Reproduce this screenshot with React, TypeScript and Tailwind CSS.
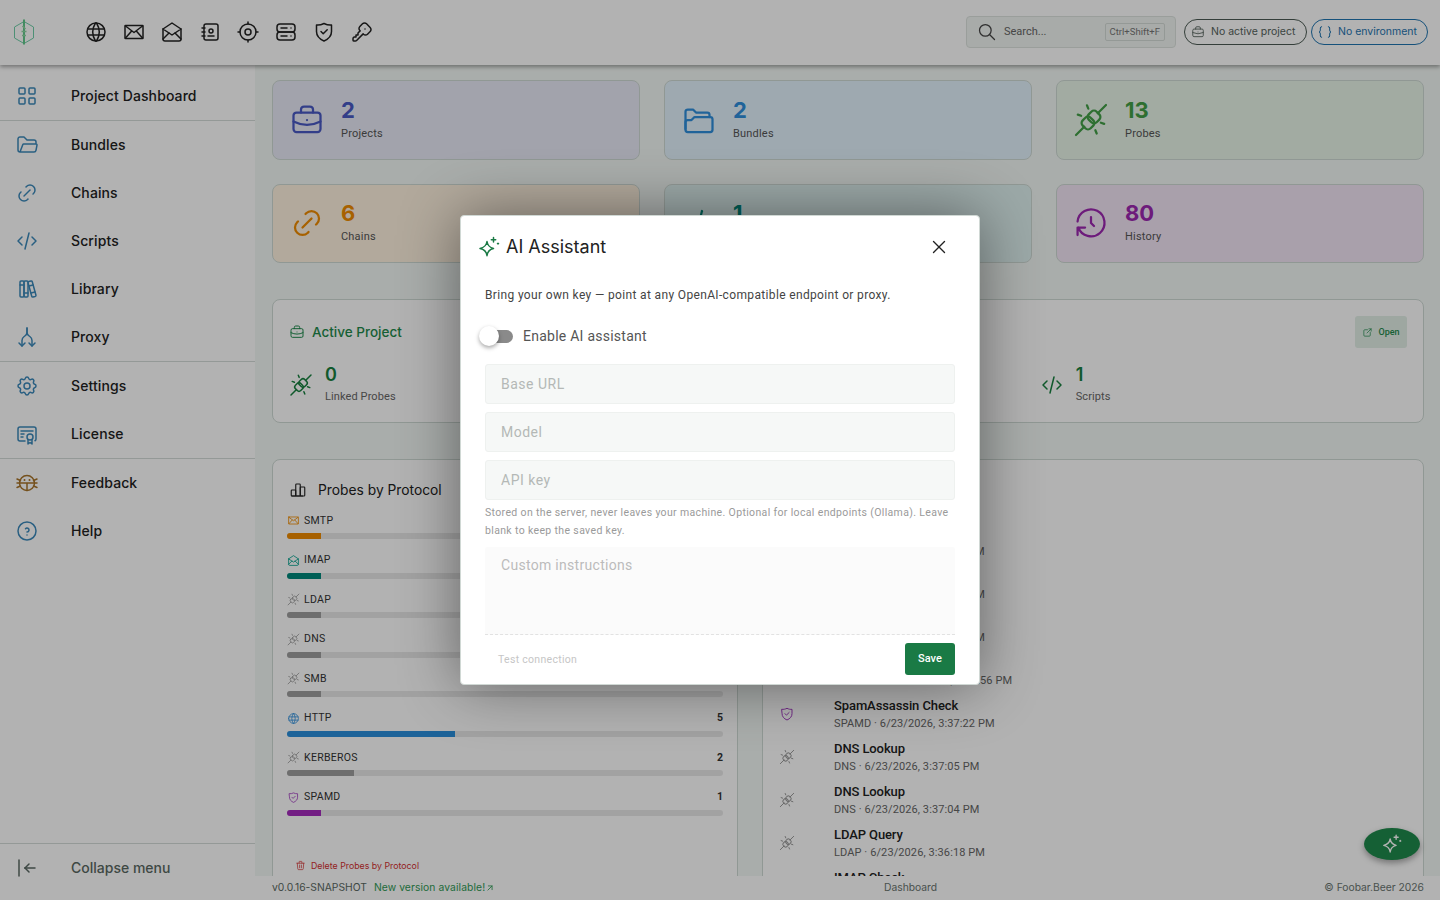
import React from 'react';
import {
  TbWorld, TbMailOpened, TbAddressBook, TbCurrentLocation, TbServer2, TbKey,
  TbLayoutGrid, TbFolderOpen, TbLink, TbCode, TbBooks, TbSettings, TbCertificate, TbHelpCircle,
  TbArrowBarToLeft, TbBriefcase, TbHistory, TbChartBar, TbTrash, TbExternalLink, TbSearch,
  TbBraces, TbX, TbArrowUpRight, TbArrowsSplit2,
} from 'react-icons/tb';

type IconProps = { className?: string; strokeWidth?: number };

const svgProps = {
  viewBox: '0 0 24 24',
  fill: 'none',
  stroke: 'currentColor',
  strokeLinecap: 'round' as const,
  strokeLinejoin: 'round' as const,
};

function ProbeIcon({ className }: IconProps) {
  return (
    <svg {...svgProps} strokeWidth="1.5" className={className}>
      <path d="M2 22l5.500-5.500M16.500 7.500L22 2" />
      <rect x="10.250" y="6.250" width="7.500" height="7.500" rx="2.500" transform="rotate(-45 14 10)" />
      <rect x="6.250" y="10.250" width="7.500" height="7.500" rx="2.500" transform="rotate(-45 10 14)" />
      <path d="M9.300 2.200l.9 2.200M3.200 8.400l2.200.8M20.800 14.600l-2.200-.8M15.800 21l-.9-2.200" />
    </svg>
  );
}

function SparkIcon({ className }: IconProps) {
  return (
    <svg {...svgProps} strokeWidth="1.5" className={className}>
      <path d="M10 6.500c.6 4.200 2.300 6 6.500 7-4.200.9-5.900 2.800-6.500 7.200-.6-4.400-2.400-6.300-7-7.200 4.600-1 6.400-2.800 7-7z" />
      <path d="M16.500 2.500v4.400M14.300 4.700h4.400M21 8.200v.9M20.500 8.600h1" />
    </svg>
  );
}

function MailXIcon({ className }: IconProps) {
  return (
    <svg {...svgProps} strokeWidth="1.5" className={className}>
      <rect x="3" y="5.500" width="18" height="13" rx="0.500" />
      <path d="M3.500 6l8.500 6.500L20.500 6M3.500 18l6.200-7M20.500 18l-6.200-7" />
    </svg>
  );
}

function ShieldIcon({ className }: IconProps) {
  return (
    <svg {...svgProps} strokeWidth="1.5" className={className}>
      <path d="M4.500 5c2.500.3 5-.3 7.500-1.500 2.500 1.200 5 1.800 7.500 1.500v6.500c0 4.500-3 7.500-7.500 9.500-4.500-2-7.500-5-7.500-9.500z" />
      <path d="M9 11.500l2.200 2.200 4-4" />
    </svg>
  );
}

function FoldersIcon({ className }: IconProps) {
  return (
    <svg {...svgProps} strokeWidth="1.5" className={className}>
      <path d="M3 18V6.500A1.500 1.500 0 0 1 4.500 5H8l2 2h7.500A1.500 1.500 0 0 1 19 8.500V10" />
      <path d="M3 18.500A1.500 1.500 0 0 0 4.500 20h15a1.500 1.500 0 0 0 1.500-1.500v-7a1.500 1.500 0 0 0-1.500-1.500H9l-2 2H4.500A1.500 1.500 0 0 0 3 13.500z" />
    </svg>
  );
}

function BugIcon({ className }: IconProps) {
  return (
    <svg {...svgProps} strokeWidth="1.5" className={className}>
      <circle cx="12" cy="12" r="7.500" />
      <path d="M4.500 12h15M12 12v7.500M2 8l3.500 1.500M2 12h2.500M2 16.500L5.500 15M22 8l-3.500 1.500M22 12h-2.500M22 16.500L18.500 15" />
      <path d="M9.500 9h.01M14.500 9h.01" strokeWidth="2" />
    </svg>
  );
}

function ProxyIcon({ className, strokeWidth }: IconProps) {
  return <TbArrowsSplit2 className={`rotate-90 ${className ?? ''}`} strokeWidth={strokeWidth} />;
}

function ServerIcon({ className, strokeWidth }: IconProps) {
  return <TbServer2 className={`-scale-x-100 ${className ?? ''}`} strokeWidth={strokeWidth} />;
}

const topIcons = [TbWorld, MailXIcon, TbMailOpened, TbAddressBook, TbCurrentLocation, ServerIcon, ShieldIcon, TbKey];

const navBlue = 'text-[#3c89ba]';
const navGroups = [
  [{ label: 'Project Dashboard', icon: TbLayoutGrid, color: navBlue }],
  [
    { label: 'Bundles', icon: TbFolderOpen, color: navBlue },
    { label: 'Chains', icon: TbLink, color: navBlue },
    { label: 'Scripts', icon: TbCode, color: navBlue },
    { label: 'Library', icon: TbBooks, color: navBlue },
    { label: 'Proxy', icon: ProxyIcon, color: navBlue },
  ],
  [
    { label: 'Settings', icon: TbSettings, color: navBlue },
    { label: 'License', icon: TbCertificate, color: navBlue },
  ],
  [
    { label: 'Feedback', icon: BugIcon, color: 'text-[#a8742a]' },
    { label: 'Help', icon: TbHelpCircle, color: navBlue },
  ],
];

const stats = [
  { value: '2', label: 'Projects', icon: TbBriefcase, bg: 'bg-[#e8eaf6]', color: 'text-[#4a5ac4]' },
  { value: '2', label: 'Bundles', icon: FoldersIcon, bg: 'bg-[#e3f2fd]', color: 'text-[#2f8fdc]' },
  { value: '13', label: 'Probes', icon: ProbeIcon, bg: 'bg-[#e8f5e9]', color: 'text-[#43a047]' },
  { value: '6', label: 'Chains', icon: TbLink, bg: 'bg-[#fff3e0]', color: 'text-[#f08c00]' },
  { value: '1', label: 'Scripts', icon: TbCode, bg: 'bg-[#e0f2f1]', color: 'text-[#00897b]' },
  { value: '80', label: 'History', icon: TbHistory, bg: 'bg-[#f3e5f5]', color: 'text-[#9c27b0]' },
];

const protocols = [
  { name: 'SMTP', count: 1, icon: MailXIcon, text: 'text-[#f08c00]', bar: 'bg-[#f08c00]' },
  { name: 'IMAP', count: 1, icon: TbMailOpened, text: 'text-[#00a08c]', bar: 'bg-[#00897b]' },
  { name: 'LDAP', count: 1, icon: ProbeIcon, text: 'text-[#9a9a9a]', bar: 'bg-[#9e9e9e]' },
  { name: 'DNS', count: 1, icon: ProbeIcon, text: 'text-[#9a9a9a]', bar: 'bg-[#9e9e9e]' },
  { name: 'SMB', count: 1, icon: ProbeIcon, text: 'text-[#9a9a9a]', bar: 'bg-[#9e9e9e]' },
  { name: 'HTTP', count: 5, icon: TbWorld, text: 'text-[#2d8fdc]', bar: 'bg-[#2a8fdc]' },
  { name: 'KERBEROS', count: 2, icon: ProbeIcon, text: 'text-[#9a9a9a]', bar: 'bg-[#9e9e9e]' },
  { name: 'SPAMD', count: 1, icon: ShieldIcon, text: 'text-[#a23cc0]', bar: 'bg-[#a52bbd]' },
];

const recent = [
  { title: 'IMAP Check', sub: 'IMAP · 6/23/2026, 3:38:41 PM', icon: TbMailOpened, color: 'text-[#00a08c]' },
  { title: 'LDAP Query', sub: 'LDAP · 6/23/2026, 3:38:30 PM', icon: ProbeIcon, color: 'text-[#9a9a9a]' },
  { title: 'DNS Lookup', sub: 'LDAP · 6/23/2026, 3:38:12 PM', icon: ProbeIcon, color: 'text-[#9a9a9a]' },
  { title: 'Kerberos Check', sub: 'KERBEROS · 6/23/2026, 3:37:56 PM', icon: ProbeIcon, color: 'text-[#9a9a9a]' },
  { title: 'SpamAssassin Check', sub: 'SPAMD · 6/23/2026, 3:37:22 PM', icon: ShieldIcon, color: 'text-[#a23cc0]' },
  { title: 'DNS Lookup', sub: 'DNS · 6/23/2026, 3:37:05 PM', icon: ProbeIcon, color: 'text-[#9a9a9a]' },
  { title: 'DNS Lookup', sub: 'DNS · 6/23/2026, 3:37:04 PM', icon: ProbeIcon, color: 'text-[#9a9a9a]' },
  { title: 'LDAP Query', sub: 'LDAP · 6/23/2026, 3:36:18 PM', icon: ProbeIcon, color: 'text-[#9a9a9a]' },
  { title: 'IMAP Check', sub: 'IMAP · 6/23/2026, 3:36:02 PM', icon: TbMailOpened, color: 'text-[#00a08c]' },
];

const inputCls =
  'h-10 w-full rounded-[3px] border border-[#eef1ef] bg-[#f6f8f7] px-[15px] text-sm tracking-[0.5px] text-[#222] outline-none placeholder:text-[#b4b8b6]';

function Logo() {
  return (
    <svg viewBox="0 0 24 28" className="h-7 w-6" fill="none">
      <path d="M12 3.500l9.500 5.500v11L12 25.500l-9.500-5.500V9z" stroke="#6fcfa8" strokeWidth="1" />
      <path d="M12 1.500v25" stroke="#62c98c" strokeWidth="2" />
      <path d="M9.500 13.500h5M10 17.500h4M10.500 8l3 3" stroke="#8fd6a2" strokeWidth="1.500" />
    </svg>
  );
}

export default function App() {
  return (
    <div className="relative flex h-[900px] w-[1440px] flex-col overflow-hidden bg-[#f3f8f5] [font-family:Roboto,sans-serif] text-[#222]">
      {/* Top bar */}
      <header className="relative z-20 flex h-[65px] shrink-0 items-center bg-white pb-px pl-3 pr-3 shadow-[0_2px_4px_rgba(0,0,0,0.35)]">
        <div className="flex w-6 items-center justify-center"><Logo /></div>
        <nav className="ml-[48px] flex items-center gap-[14px]">
          {topIcons.map((Icon, i) => (
            <Icon key={i} className="h-6 w-6 text-[#222]" strokeWidth={1.5} />
          ))}
        </nav>
        <div className="ml-auto flex items-center">
          <div className="flex h-8 w-[210px] items-center rounded-[4px] border border-[#dde3df] bg-[#f1f5f2] pl-[10px] pr-[10px]">
            <TbSearch className="h-5 w-5 text-[#444]" strokeWidth={1.5} />
            <span className="ml-[7px] text-[11px] text-[#666]">Search...</span>
            <span className="ml-auto rounded-[2px] border border-[#d5dbd7] px-1 py-px text-[9.500px] text-[#777]">Ctrl+Shift+F</span>
          </div>
          <div className="ml-2 flex h-[26px] w-[123px] items-center gap-[6px] rounded-full border border-[#4b5a53] pl-[6px] [font-family:Inter,sans-serif] text-[10.500px] text-[#55625c]">
            <TbBriefcase className="h-[14px] w-[14px]" strokeWidth={1.5} />
            No active project
          </div>
          <div className="ml-1 flex h-[26px] w-[117px] items-center gap-[5px] rounded-full border border-[#1f74b0] pl-[5px] [font-family:Inter,sans-serif] text-[10.500px] text-[#1f74b0]">
            <TbBraces className="h-4 w-4" strokeWidth={1.5} />
            No environment
          </div>
        </div>
      </header>

      <div className="flex min-h-0 flex-1">
        {/* Sidebar */}
        <aside className="flex w-[255px] shrink-0 flex-col bg-white pt-[7px] [font-family:Inter,sans-serif]">
          {navGroups.map((group, g) => (
            <div key={g} className={g < navGroups.length - 1 ? 'border-b border-[#d4dcd8]' : ''}>
              {group.map((item) => (
                <div key={item.label} className="flex h-12 items-center pl-[15px]">
                  <item.icon className={`h-6 w-6 ${item.color}`} strokeWidth={1.5} />
                  <span className="ml-8 text-sm font-medium tracking-[0.1px] text-[#222]">{item.label}</span>
                </div>
              ))}
            </div>
          ))}
          <div className="mt-auto flex h-[57px] items-start border-t border-[#d4dcd8] pl-[15px] pt-3">
            <TbArrowBarToLeft className="h-6 w-6 text-[#5a6862]" strokeWidth={1.5} />
            <span className="ml-8 mt-[2px] text-sm font-medium text-[#5a6862]">Collapse menu</span>
          </div>
        </aside>

        {/* Main */}
        <div className="flex min-w-0 flex-1 flex-col">
          <main className="min-h-0 flex-1 overflow-hidden pl-[17px] pr-4 pt-[15px]">
            <div className="grid grid-cols-3 gap-x-6 gap-y-6">
              {stats.map((s) => (
                <div key={s.label} className={`flex h-[79.500px] items-center rounded-lg border border-[#cfdad5] pl-4 ${s.bg}`}>
                  <s.icon className={`h-9 w-9 ${s.color}`} strokeWidth={1.5} />
                  <div className="ml-4">
                    <div className={`[font-family:Inter,sans-serif] text-[22px] leading-[26px] font-bold ${s.color}`}>{s.value}</div>
                    <div className="mt-[2px] text-[11px] leading-[18px] tracking-[0.2px] text-[#555]">{s.label}</div>
                  </div>
                </div>
              ))}
            </div>

            {/* Active project */}
            <section className="mt-9 h-[124px] rounded-lg border border-[#cfdad5] bg-white px-4 pt-4">
              <div className="flex h-8 items-center">
                <TbBriefcase className="h-4 w-4 text-[#1f8a4c]" strokeWidth={1.5} />
                <h2 className="ml-[7px] [font-family:Inter,sans-serif] text-[13.500px] font-medium text-[#1f8a4c]">Active Project</h2>
                <button className="ml-auto flex h-8 w-[52px] items-center justify-center gap-[5px] rounded-[3px] bg-[#e2efe7] pt-px text-[9px] font-medium text-[#1f8a4c]">
                  <TbExternalLink className="h-[11px] w-[11px]" strokeWidth={1.5} />
                  Open
                </button>
              </div>
              <div className="mt-[15px] grid grid-cols-3 gap-x-2">
                {[
                  { v: '0', l: 'Linked Probes', icon: ProbeIcon },
                  { v: '0', l: 'Linked Chains', icon: TbLink },
                  { v: '1', l: 'Scripts', icon: TbCode },
                ].map((x) => (
                  <div key={x.l} className="flex items-center">
                    <x.icon className="h-6 w-6 text-[#17803f]" strokeWidth={1.5} />
                    <div className="ml-3">
                      <div className="[font-family:Inter,sans-serif] text-lg leading-[24px] font-semibold text-[#17803f]">{x.v}</div>
                      <div className="mt-[1px] text-[11px] leading-[18px] tracking-[0.1px] text-[#666]">{x.l}</div>
                    </div>
                  </div>
                ))}
              </div>
            </section>

            {/* Charts */}
            <div className="mt-9 grid grid-cols-[466px_1fr] gap-6">
              <section className="h-[480px] rounded-lg border border-[#cfdad5] bg-white px-[14px] pt-5">
                <div className="flex h-5 items-center pl-[2px]">
                  <TbChartBar className="h-[18px] w-[18px] text-[#222]" strokeWidth={1.5} />
                  <h3 className="ml-[11px] [font-family:Inter,sans-serif] text-[13.800px] text-[#222]">Probes by Protocol</h3>
                </div>
                <div className="mt-3">
                  {protocols.map((p) => (
                    <div key={p.name} className="h-[39.500px]">
                      <div className="flex h-[17px] items-center">
                        <p.icon className={`h-[13px] w-[13px] ${p.text}`} strokeWidth={1.5} />
                        <span className="ml-[4px] text-[10.500px] tracking-[0.3px] text-[#333]">{p.name}</span>
                        <span className="ml-auto text-[10.500px] font-bold text-[#333]">{p.count}</span>
                      </div>
                      <div className="mt-1 h-[6px] overflow-hidden rounded-full bg-[#e9e9e9]">
                        <div className={`h-full ${p.bar}`} style={{ width: `${(p.count / 13) * 100}%` }} />
                      </div>
                    </div>
                  ))}
                </div>
                <div className="mt-[31px] flex items-center pl-[8px]">
                  <TbTrash className="h-[11px] w-[11px] text-[#d32f2f]" strokeWidth={1.5} />
                  <span className="ml-[5px] [font-family:Inter,sans-serif] text-[8.800px] text-[#d32f2f]">Delete Probes by Protocol</span>
                </div>
              </section>
              <section className="h-[480px] rounded-lg border border-[#cfdad5] bg-white pl-4 pt-5">
                <h3 className="[font-family:Inter,sans-serif] text-sm text-[#222]">Recent Activity</h3>
                <div className="mt-[21px]">
                  {recent.map((r, i) => (
                    <div key={i} className="flex h-[43px] items-center">
                      <r.icon className={`-mt-[2px] h-4 w-4 shrink-0 ${r.color}`} strokeWidth={1.5} />
                      <div className="ml-[39px]">
                        <div className="text-[13px] leading-[18px] font-medium tracking-[-0.1px] text-[#222]">{r.title}</div>
                        <div className="text-[11px] leading-[18px] tracking-[0.1px] text-[#666]">{r.sub}</div>
                      </div>
                    </div>
                  ))}
                </div>
              </section>
            </div>
          </main>

          <footer className="grid h-6 shrink-0 grid-cols-[612px_auto_1fr] items-center bg-white pl-[17px] pr-4 text-[10.300px] [font-family:Inter,sans-serif]">
            <div className="flex items-center">
              <span className="text-[#5a6862]">v0.0.16-SNAPSHOT</span>
              <span className="ml-[7px] flex items-center tracking-[0.1px] text-[#2f9a55]">New version available!<TbArrowUpRight className="h-[10px] w-[10px]" /></span>
            </div>
            <span className="text-[#6a7570]">Dashboard</span>
            <span className="text-right text-[#6a7570]">© Foobar.Beer 2026</span>
          </footer>
        </div>
      </div>

      {/* Floating assistant button */}
      <button className="absolute bottom-[40px] right-5 flex h-8 w-14 items-center justify-center rounded-[50%] bg-[#1f8a4c] text-white shadow-[0_3px_6px_rgba(0,0,0,0.35)]">
        <SparkIcon className="h-[22px] w-[22px]" />
      </button>

      {/* Dialog */}
      <div className="absolute inset-0 z-30 flex items-center justify-center bg-black/30">
        <div className="flex h-[470px] w-[520px] flex-col rounded-[4px] border border-[#d0d8d4] bg-white px-6 shadow-[0_0_60px_rgba(0,0,0,0.45)]">
          <div className="flex h-[62px] shrink-0 items-center">
            <SparkIcon className="-ml-[8px] h-6 w-6 text-[#1a7a45]" />
            <h2 className="ml-[5px] [font-family:Inter,sans-serif] text-lg text-[#222]">AI Assistant</h2>
            <TbX className="ml-auto mr-[5px] h-[22px] w-[22px] text-[#222]" strokeWidth={1.5} />
          </div>
          <p className="mt-[8px] text-xs leading-[18px] tracking-[0.35px] text-[#444]">Bring your own key — point at any OpenAI-compatible endpoint or proxy.</p>
          <div className="mt-[20px] flex h-6 items-center">
            <div className="relative h-[13px] w-[28px] rounded-full bg-[#8a8a8a]">
              <span className="absolute -top-[3.500px] -left-[6px] h-5 w-5 rounded-full bg-white shadow-[0_2px_4px_rgba(0,0,0,0.35)]" />
            </div>
            <span className="ml-[10px] text-sm tracking-[0.25px] text-[#555]">Enable AI assistant</span>
          </div>
          <div className="mt-[16px] flex flex-col gap-2">
            <input className={inputCls} placeholder="Base URL" />
            <input className={inputCls} placeholder="Model" />
            <input className={inputCls} placeholder="API key" />
          </div>
          <p className="mt-[4px] text-[10.500px] leading-[18px] tracking-[0.35px] text-[#9a9a9a]">Stored on the server, never leaves your machine. Optional for local endpoints (Ollama). Leave blank to keep the saved key.</p>
          <textarea className="mt-[7px] h-[88px] w-full resize-none rounded-t-[3px] border-b border-dashed border-[#e2e2e2] bg-[#fbfbfb] px-4 pt-2 text-sm tracking-[0.3px] outline-none placeholder:text-[#bbbbbb]" placeholder="Custom instructions" />
          <div className="mt-2 flex items-center">
            <span className="ml-[13px] pt-px text-[10.500px] tracking-[0.3px] text-[#c6c6c6]">Test connection</span>
            <button className="ml-auto h-8 w-[50px] rounded-[3px] bg-[#1a7a45] pt-px text-[11px] font-medium text-white">Save</button>
          </div>
        </div>
      </div>
    </div>
  );
}
